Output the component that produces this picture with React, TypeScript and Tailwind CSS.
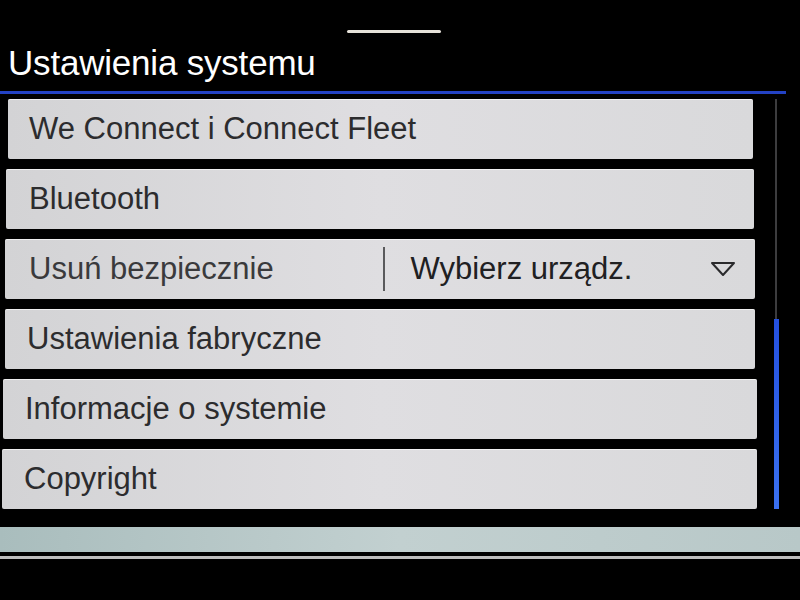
import React from "react";

// perspective of the photo: rows grow slightly wider toward the bottom
const rows = [
  { label: "We Connect i Connect Fleet", box: "ml-[8px] mr-[2px]", pad: "pl-[21px]" },
  { label: "Bluetooth", box: "ml-[6px] mr-[1px]", pad: "pl-[23px]" },
  { label: "__select__", box: "ml-[5px] mr-0", pad: "pl-[24px]" },
  { label: "Ustawienia fabryczne", box: "ml-[5px] mr-0", pad: "pl-[22px]" },
  { label: "Informacje o systemie", box: "ml-[3px] -mr-[2px]", pad: "pl-[22px]" },
  { label: "Copyright", box: "ml-[2px] -mr-[2px]", pad: "pl-[22px]" },
];

const rowClass =
  "h-[60px] flex items-center rounded-[2px] bg-gradient-to-r from-[#d3d3d5] via-[#dfdee1] to-[#d9d9db] shadow-[inset_0_1px_0_rgba(255,255,255,0.6)]";

const Row: React.FC<{ label: string; box: string; pad: string }> = ({ label, box, pad }) => {
  if (label === "__select__") {
    return (
      <div className={`${rowClass} ${box}`}>
        <span className={`${pad} w-[378px] text-[#3a3a3c]`}>Usuń bezpiecznie</span>
        <span className="w-[1.5px] h-[44px] bg-[#5a5a5c]" />
        <span className="pl-[26px] flex-1 text-[#202022]">Wybierz urządz.</span>
        <svg width="26" height="18" viewBox="0 0 26 18" className="mr-[19px]">
          <path d="M2 3 L24 3 L13 15 Z" fill="none" stroke="#2a2a2c" strokeWidth="2" strokeLinejoin="round" />
        </svg>
      </div>
    );
  }
  return (
    <div className={`${rowClass} ${box}`}>
      <span className={`${pad} text-[#2c2c2e]`}>{label}</span>
    </div>
  );
};

const App: React.FC = () => {
  return (
    <div
      className="w-[800px] h-[600px] bg-black overflow-hidden flex flex-col"
      style={{ fontFamily: '"Liberation Sans", Arial, sans-serif' }}
    >
      <div className="pt-[30px] pl-[347px]">
        <div className="w-[94px] h-[3px] bg-[#e6e2da] rounded-full" />
      </div>

      <h1 className="mt-[10px] pl-[8px] text-[35px] leading-[40px] text-white tracking-[-0.2px]">
        Ustawienia systemu
      </h1>

      <div className="mt-[8px] w-[786px] h-[3px] bg-[#2342c4]" />

      <div className="mt-[5px] flex">
        <div className="w-[755px] flex flex-col gap-[10px] text-[31px]">
          {rows.map((r) => (
            <Row key={r.label} {...r} />
          ))}
        </div>
        <div className="ml-[18px] w-[6px] h-[410px] flex flex-col items-center">
          <div className="flex-1 w-[2px] bg-[#3c3c3e]" />
          <div className="h-[190px] w-[5px] bg-gradient-to-b from-[#2450e0] to-[#3a70f0]" />
        </div>
      </div>

      <div className="mt-[18px] h-[25px] bg-gradient-to-r from-[#a9bdbd] via-[#c2d0d0] to-[#b8c8c8]" />
      <div className="mt-[4px] h-[3px] bg-[#bdbdbd]" />
    </div>
  );
};

export default App;
